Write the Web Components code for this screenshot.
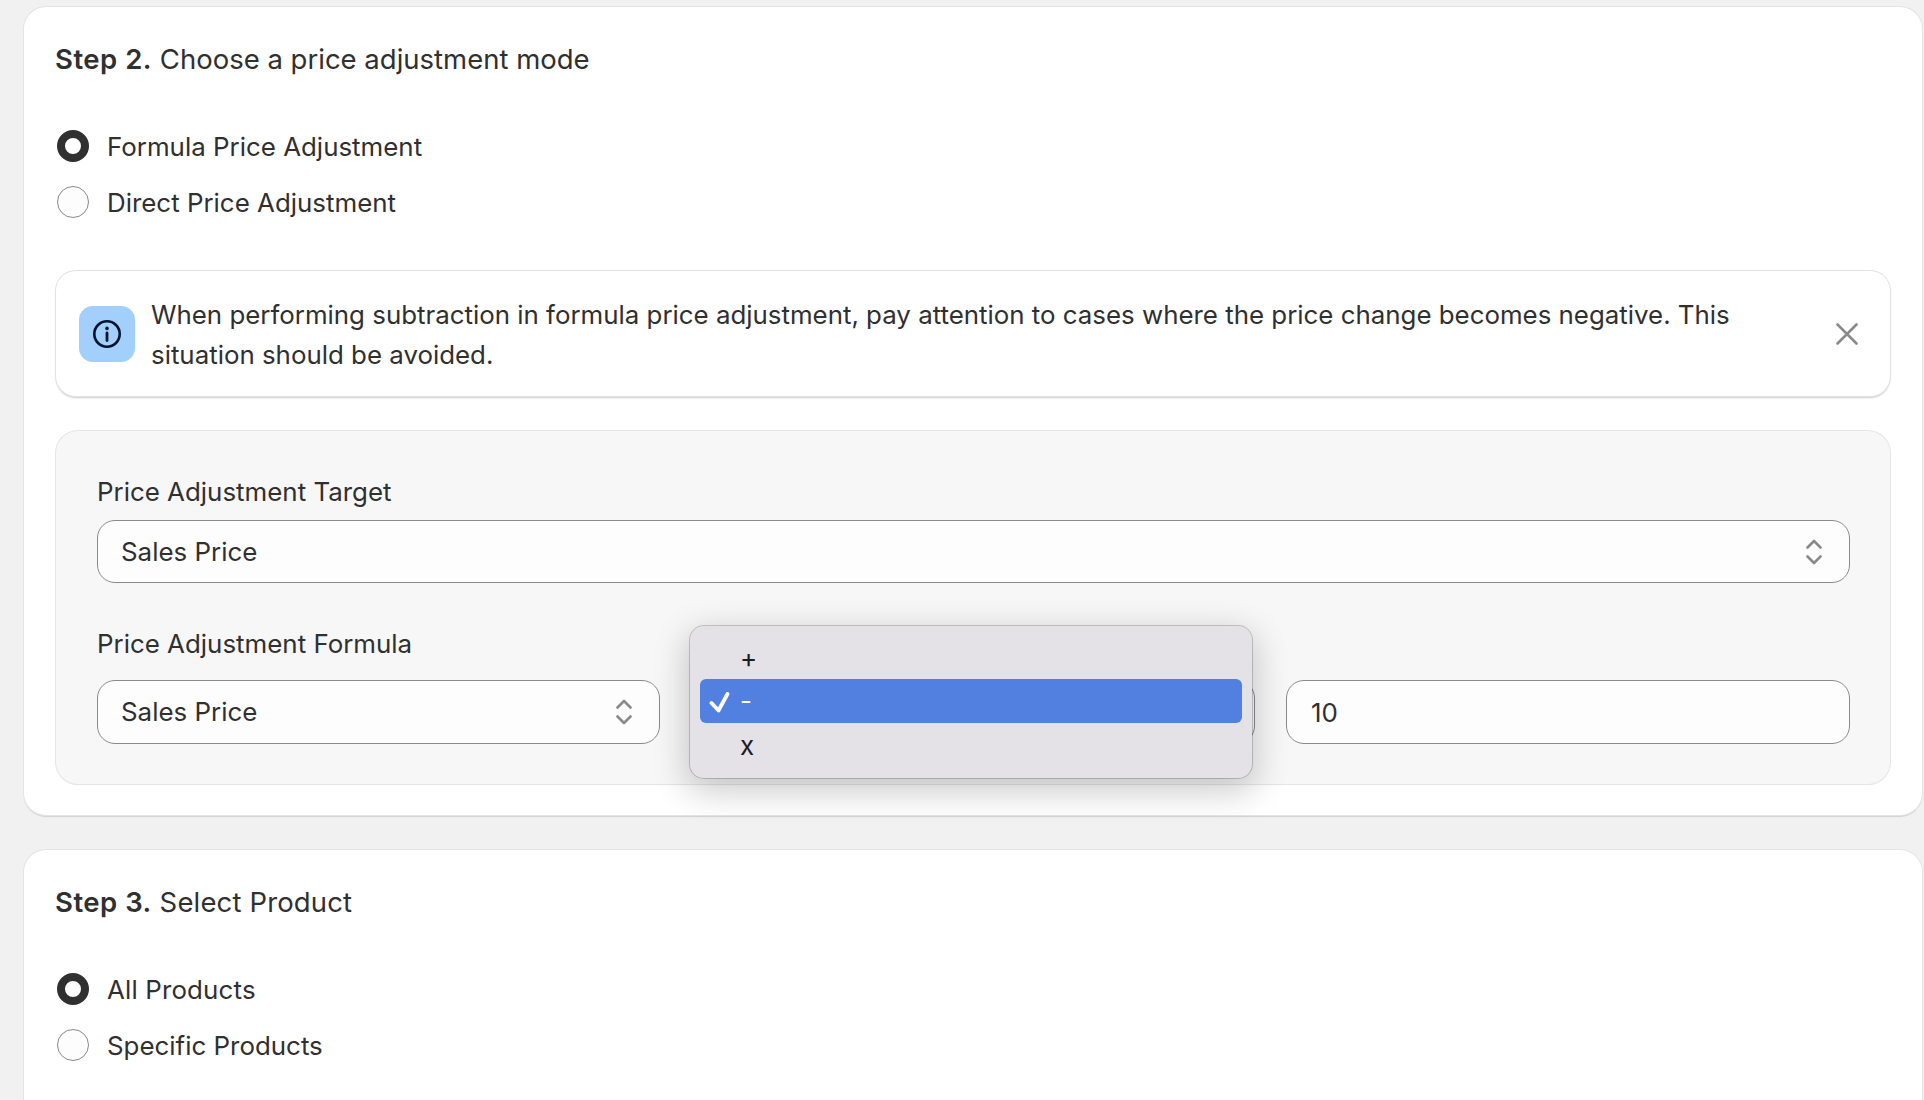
<!DOCTYPE html>
<html lang="en">
<head>
<meta charset="utf-8">
<title>Price adjustment</title>
<style>
html,body{margin:0;padding:0;background:#f1f1f1;height:1100px;overflow:hidden}
body{font-family:Inter,"Noto Sans",sans-serif;font-size:25.9px;color:#303030}
page-stack{padding:7px 2px 0 24px}
</style>
</head>
<body>
<template id="t-stack"><style>:host{display:flex;flex-direction:column;gap:35px;box-sizing:border-box}</style><slot></slot></template>

<template id="t-card"><style>
:host{display:block;background:#fff;border-radius:22px 22px var(--r-b,22px) var(--r-b,22px);padding:32px 32px 31px;box-sizing:border-box;height:var(--h,auto);
box-shadow:0 0 0 1px #e4e4e4,0 2px 1px 0 #d2d2d2;position:relative}
.title{font-size:27.5px;line-height:40px;margin:0 0 51px -1px;font-weight:400;color:#303030}
::slotted([slot=lead]){font-weight:600;letter-spacing:.5px}
</style><h2 class="title"><slot name="lead"></slot> <slot name="title"></slot></h2><slot></slot></template>

<template id="t-radios"><style>:host{display:flex;flex-direction:column;gap:24px;padding-left:1px}</style><slot></slot></template>

<template id="t-radio"><style>
:host{display:flex;align-items:center;gap:18px;height:32px;line-height:32px}
.dot{width:32px;height:32px;box-sizing:border-box;border-radius:50%;flex:none;background:#fdfdfd;border:1.5px solid #8a8a8a}
:host([checked]) .dot{border:8px solid #303030;background:#fff}
.lbl{margin-top:2px}
</style><span class="dot"></span><span class="lbl"><slot></slot></span></template>

<template id="t-banner"><style>
:host{display:flex;align-items:center;background:#fff;border-radius:20px;height:125px;box-sizing:border-box;padding:0 32px 0 23px;margin-top:53px;
box-shadow:0 0 0 1px #e2e2e2,0 2px 2px 0 #cfcfcf}
.ico{width:56px;height:56px;border-radius:14px;background:#a3cffc;display:flex;align-items:center;justify-content:center;flex:none;margin-right:16px}
.txt{flex:1;line-height:40px;max-width:1600px;font-size:25.86px;margin-top:2px}
svg{display:block}
.close{flex:none;margin-left:auto}
</style>
<span class="ico"><svg width="30" height="30" viewBox="0 0 30 30" fill="none"><circle cx="15" cy="15" r="12.7" stroke="#00142e" stroke-width="2.6"/><circle cx="15" cy="9.4" r="1.8" fill="#00142e"/><path d="M15 14v7.5" stroke="#00142e" stroke-width="2.8" stroke-linecap="round"/></svg></span>
<span class="txt"><slot></slot></span>
<svg class="close" width="22" height="22" viewBox="0 0 22 22" fill="none"><path d="M1.5 1.5l19 19M20.5 1.5l-19 19" stroke="#8a8a8a" stroke-width="2.6" stroke-linecap="round"/></svg></template>

<template id="t-panel"><style>
:host{display:flex;flex-direction:column;gap:41px;background:#f7f7f7;border-radius:22px;box-sizing:border-box;padding:41px 40px 41px 41px;margin-top:35px;height:353px;
box-shadow:0 0 0 1px #e6e6e6,0 1px 1px 0 #dedede}
</style><slot></slot></template>

<template id="t-field"><style>
:host{display:flex;flex-direction:column;min-width:0}
.label{line-height:40px;height:40px}
.gap{height:var(--label-gap,8px)}
</style><div class="label"><slot name="label"></slot></div><div class="gap"></div><slot></slot></template>

<template id="t-select"><style>
:host{display:flex;align-items:center;justify-content:space-between;height:var(--ctl-h,63px);box-sizing:border-box;background:#fdfdfd;border:1.5px solid #8a8a8a;border-radius:18px;padding:0 27px 0 23px}
svg{display:block;flex:none}
.v{line-height:40px}
</style><span class="v"><slot></slot></span><svg width="16" height="26" viewBox="0 0 16 26" fill="none"><path d="M1.5 8.5L8 2l6.5 6.5M1.5 17.5L8 24l6.5-6.5" stroke="#8a8a8a" stroke-width="2.6" stroke-linecap="round" stroke-linejoin="round"/></svg></template>

<template id="t-input"><style>
:host{display:flex;align-items:center;height:var(--ctl-h,63px);box-sizing:border-box;background:#fdfdfd;border:1.5px solid #8a8a8a;border-radius:18px;padding:0 24px;margin-left:-1px}
</style><slot></slot></template>

<template id="t-formula"><style>
:host{display:grid;grid-template-columns:repeat(3,1fr);column-gap:32px;align-items:end;position:relative;--ctl-h:64px}
</style><slot></slot><slot name="overlay"></slot></template>

<template id="t-menu"><style>
:host{position:absolute;left:593px;top:2px;width:562px;height:152px;box-sizing:border-box;background:#e4e2e7;border-radius:14px;padding:10px 10px;
box-shadow:0 0 0 1px rgba(0,0,0,.18),0 10px 34px 4px rgba(0,0,0,.2);font-size:26px;color:#1d1d1f;z-index:5;display:flex;flex-direction:column}
</style><slot></slot></template>

<template id="t-opt"><style>
:host{display:flex;align-items:center;height:44px;border-radius:6px;padding-left:40px;position:relative;flex:none;line-height:44px}
:host([selected]){background:#5180e1;color:#fff}
svg{position:absolute;left:8px;top:12px;display:none}
:host([selected]) svg{display:block}
</style><svg width="22" height="22" viewBox="0 0 22 22" fill="none"><path d="M3.5 12l7 7.5L19.5 3" stroke="#fff" stroke-width="3.8" stroke-linecap="round" stroke-linejoin="round"/></svg><slot></slot></template>

<page-stack>
  <step-card>
    <span slot="lead">Step 2.</span><span slot="title">Choose a price adjustment mode</span>
    <radio-group>
      <radio-option checked>Formula Price Adjustment</radio-option>
      <radio-option>Direct Price Adjustment</radio-option>
    </radio-group>
    <info-banner>When performing subtraction in formula price adjustment, pay attention to cases where the price change becomes negative. This situation should be avoided.</info-banner>
    <form-panel>
      <form-field>
        <span slot="label">Price Adjustment Target</span>
        <select-box>Sales Price</select-box>
      </form-field>
      <formula-row>
        <form-field style="--label-gap:16px">
          <span slot="label">Price Adjustment Formula</span>
          <select-box>Sales Price</select-box>
        </form-field>
        <select-box></select-box>
        <text-input>10</text-input>
        <popup-menu slot="overlay">
          <menu-option style="height:43px">+</menu-option>
          <menu-option selected>-</menu-option>
          <menu-option style="height:46px">x</menu-option>
        </popup-menu>
      </formula-row>
    </form-panel>
  </step-card>
  <step-card style="--h:250px;--r-b:0">
    <span slot="lead">Step 3.</span><span slot="title" style="letter-spacing:.15px">Select Product</span>
    <radio-group>
      <radio-option checked><span style="letter-spacing:.15px">All Products</span></radio-option>
      <radio-option>Specific Products</radio-option>
    </radio-group>
  </step-card>
</page-stack>
<script>
const map={'page-stack':'t-stack','step-card':'t-card','radio-group':'t-radios','radio-option':'t-radio','info-banner':'t-banner','form-panel':'t-panel','form-field':'t-field','select-box':'t-select','text-input':'t-input','formula-row':'t-formula','popup-menu':'t-menu','menu-option':'t-opt'};
for(const [name,id] of Object.entries(map)){
  customElements.define(name,class extends HTMLElement{
    constructor(){super();this.attachShadow({mode:'open'}).appendChild(document.getElementById(id).content.cloneNode(true));}
  });
}
</script>
</body>
</html>
